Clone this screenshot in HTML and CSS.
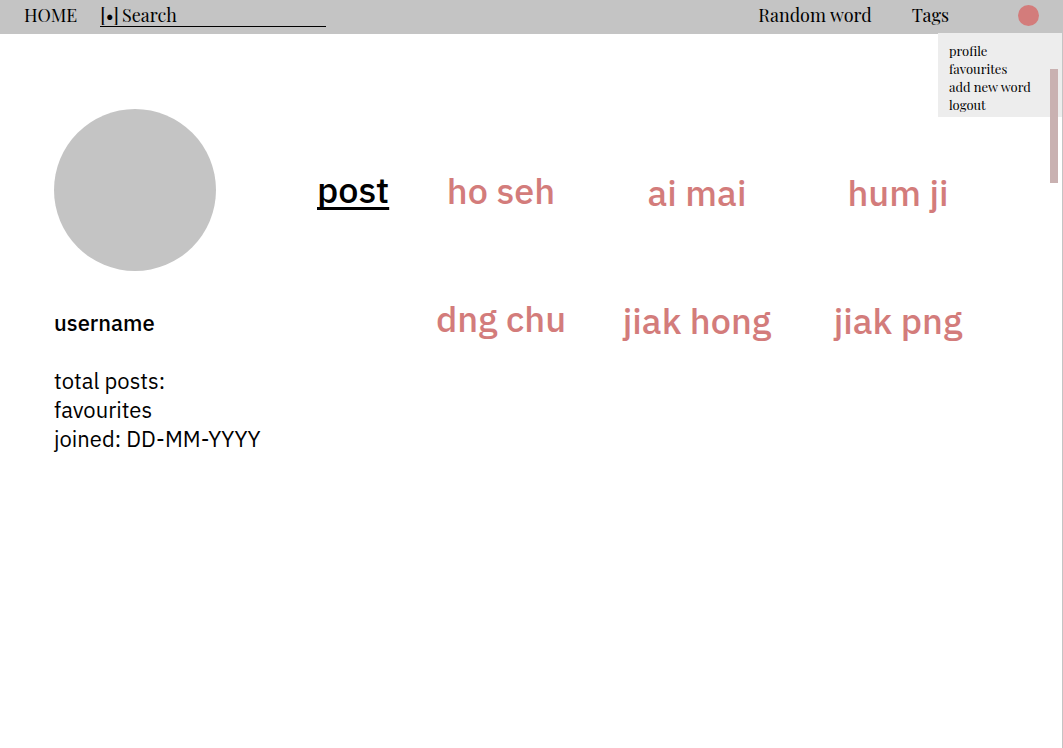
FILE: index.html
```html
<!DOCTYPE html>
<html lang="en">
<head>
<meta charset="utf-8">
<meta name="viewport" content="width=device-width, initial-scale=1">
<title>Profile</title>
<link rel="stylesheet" href="styles.css">
</head>
<body>
<header class="topbar">
  <a class="topbar-link" href="#">HOME</a>
  <form class="search">
    <label class="search-label" for="search">[•]</label>
    <input class="search-input" id="search" type="text" placeholder="Search">
  </form>
  <nav class="topbar-nav">
    <a class="topbar-link random-link" href="#">Random word</a>
    <a class="topbar-link tags-link" href="#">Tags</a>
    <button class="account" type="button" aria-label="Account menu"></button>
  </nav>
  <nav class="menu">
    <a class="menu-link" href="#">profile</a>
    <a class="menu-link" href="#">favourites</a>
    <a class="menu-link" href="#">add new word</a>
    <a class="menu-link" href="#">logout</a>
  </nav>
  <div class="scroll-thumb"></div>
</header>
<main class="page">
  <section class="profile">
    <div class="avatar"></div>
    <h1 class="username">username</h1>
    <p class="stat">total posts:</p>
    <p class="stat">favourites</p>
    <p class="stat">joined: DD-MM-YYYY</p>
  </section>
  <section class="posts">
    <h2 class="posts-title">post</h2>
    <ul class="words">
      <li><a class="word" href="#">ho seh</a></li>
      <li><a class="word" href="#">ai mai</a></li>
      <li><a class="word" href="#">hum ji</a></li>
      <li><a class="word" href="#">dng chu</a></li>
      <li><a class="word" href="#">jiak hong</a></li>
      <li><a class="word" href="#">jiak png</a></li>
    </ul>
  </section>
</main>
</body>
</html>
```

FILE: styles.css
```css
* { box-sizing: border-box; }

body {
  margin: 0;
  min-height: 100vh;
  display: flex;
  flex-direction: column;
  background: #fff;
  color: #000;
  font-family: "IBM Plex Sans", "Open Sans", sans-serif;
}

a { color: inherit; text-decoration: none; }

.topbar {
  position: relative;
  display: flex;
  align-items: flex-start;
  height: 34px;
  padding: 5px 24px 0;
  background: #c4c4c4;
  font-family: "Playfair Display", "Liberation Serif", serif;
  font-size: 18px;
  line-height: 21px;
}

.search {
  display: flex;
  gap: 3px;
  width: 226px;
  margin-left: 23px;
  border-bottom: 1px solid #000;
}

.search-input {
  flex: 1;
  min-width: 0;
  height: 21px;
  padding: 0;
  border: 0;
  outline: 0;
  background: transparent;
  color: #000;
  font: inherit;
}

.search-input::placeholder { color: #000; opacity: 1; }

.topbar-nav {
  display: flex;
  margin-left: auto;
}

.tags-link { margin: 0 69px 0 40px; }

.account {
  width: 21px;
  height: 21px;
  padding: 0;
  border: 0;
  border-radius: 50%;
  background: #d37c7b;
}

.menu {
  position: absolute;
  top: 33px;
  right: 1px;
  display: flex;
  flex-direction: column;
  width: 124px;
  padding: 9px 11px 3px;
  background: #ededed;
  font-size: 13px;
  line-height: 18px;
}

.scroll-thumb {
  position: absolute;
  top: 69px;
  right: 5px;
  width: 8px;
  height: 114px;
  background: #c9b1b1;
}

.page {
  flex: 1;
  display: grid;
  grid-template-columns: 263px 1fr;
  padding: 75px 62px 40px 54px;
  border-right: 1px solid #c4c4c4;
}

.avatar {
  width: 162px;
  height: 162px;
  border-radius: 50%;
  background: #c4c4c4;
}

.username {
  margin: 38px 0 29px;
  font-size: 22px;
  line-height: 28px;
  font-weight: 500;
}

.stat {
  margin: 0;
  font-size: 22px;
  line-height: 29px;
}

.posts {
  display: grid;
  grid-template-columns: 72px 1fr;
  column-gap: 15px;
  align-items: start;
  padding-top: 60px;
}

.posts-title {
  margin: 0;
  font-size: 36px;
  line-height: 42px;
  font-weight: 500;
  text-decoration: underline 3px;
  text-decoration-skip-ink: none;
  text-underline-offset: 4px;
}

.words {
  display: grid;
  grid-template-columns: 194fr 198fr 204fr;
  row-gap: 84px;
  margin: 0;
  padding: 1px 0 0;
  list-style: none;
  text-align: center;
  font-size: 36px;
  line-height: 42px;
  font-weight: 500;
}

.words li:not(:nth-child(3n + 1)) { padding-top: 2px; }

.word { color: #d37c7b; }
```
